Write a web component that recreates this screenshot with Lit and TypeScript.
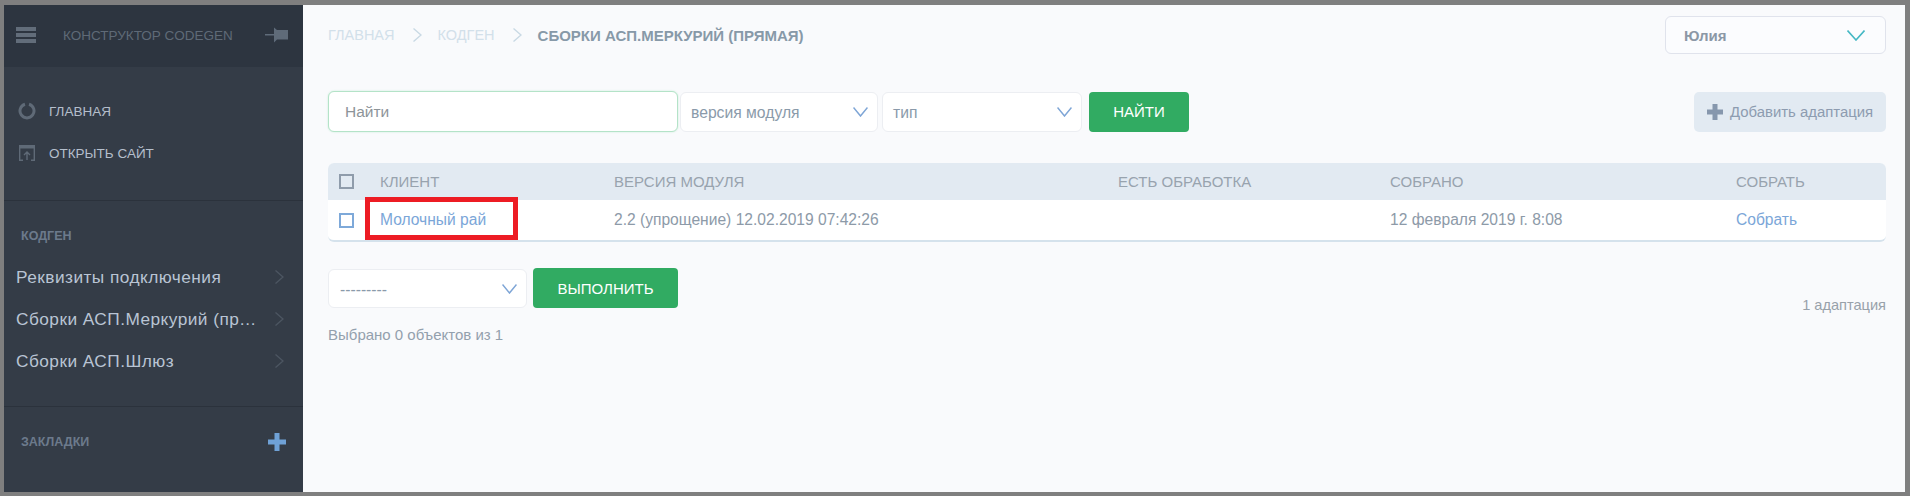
import { LitElement, html, css } from "lit";
import { customElement } from "lit/decorators.js";

const chevron = (w: number, h: number, color: string, sw = 1.5) => html`<svg class="chev" width=${w} height=${h} viewBox="0 0 ${w} ${h}" fill="none" stroke=${color} stroke-width=${sw}><path d="M0.5 0.5 L${w / 2} ${h - 1} L${w - 0.5} 0.5"/></svg>`;
const right = (w: number, h: number, color: string) => html`<svg width=${w} height=${h} viewBox="0 0 ${w} ${h}" fill="none" stroke=${color} stroke-width="1.4"><path d="M0.5 0.5 L${w - 1} ${h / 2} L0.5 ${h - 0.5}"/></svg>`;
const plus = (s: number, t: number, color: string) => html`<svg width=${s} height=${s} viewBox="0 0 ${s} ${s}" fill=${color}><rect x=${(s - t) / 2} y="0" width=${t} height=${s}/><rect x="0" y=${(s - t) / 2} width=${s} height=${t}/></svg>`;

@customElement("app-root")
export class AppRoot extends LitElement {
  static styles = css`
    :host { display: block; width: 1910px; height: 496px; box-sizing: border-box; background: #7f7f7f; padding: 5px 5px 4px 4px; font-family: "Liberation Sans", Arial, sans-serif; overflow: hidden; }
    * { box-sizing: border-box; }
    .app { display: flex; height: 100%; }
    .side { width: 299px; flex: none; background: #343c47; display: flex; flex-direction: column; }
    .side-top { height: 62px; flex: none; background: #2d3540; display: flex; align-items: flex-start; padding: 22px 0 0 12px; }
    .title { margin-left: 27px; font-size: 13.5px; line-height: 20px; margin-top: -1px; color: #5f6a77; width: 202px; white-space: nowrap; }
    .links { height: 134px; flex: none; padding: 34px 0 0 14px; display: flex; flex-direction: column; gap: 22px; border-bottom: 1px solid #2b323c; }
    .link { display: flex; align-items: center; height: 20px; font-size: 13.5px; color: #b5bfcc; gap: 13px; }
    .link svg { flex: none; width: 18px; }
    .section { padding: 27px 0 0 17px; height: 206px; flex: none; border-bottom: 1px solid #2b323c; }
    .sec-title { font-size: 12.5px; font-weight: 700; color: #6c7a8c; line-height: 16px; }
    .items { margin: 18px 0 0 -5px; display: flex; flex-direction: column; gap: 12px; }
    .item { display: flex; align-items: center; height: 30px; font-size: 17.3px; letter-spacing: 0.45px; color: #b9c4d4; }
    .item span { width: 246px; margin-right: 13px; white-space: nowrap; overflow: hidden; text-overflow: ellipsis; }
    .marks { display: flex; align-items: center; justify-content: space-between; padding: 26px 17px 0 17px; }
    .main { flex: 1; background: #f9fafc; padding: 11px 19px 0 25px; min-width: 0; }
    .top { display: flex; align-items: center; justify-content: space-between; height: 38px; }
    .crumbs { display: flex; align-items: center; font-size: 14.5px; color: #d2e0ea; white-space: nowrap; }
    .crumbs svg { margin: 0 16px 0 18px; }
    .crumbs b { color: #8799a8; font-size: 15px; }
    .user { width: 221px; height: 38px; border: 1px solid #e0e3ec; border-radius: 6px; background: #fbfcfe; display: flex; align-items: center; justify-content: space-between; padding: 0 20px 0 18px; font-size: 15px; font-weight: 700; color: #8b98a6; }
    .filters { display: flex; align-items: center; margin-top: 37px; height: 41px; }
    .search { width: 350px; height: 41px; background: #fff; border: 1px solid #b4e3c8; border-radius: 6px; box-shadow: 0 0 2px #c6ecd6; padding: 0 16px; font-size: 15.5px; color: #8d9499; display: flex; align-items: center; margin-right: 2px; }
    .select { height: 40px; background: #fff; border: 1px solid #eceef2; border-radius: 6px; display: flex; align-items: center; justify-content: space-between; padding: 0 9px 0 10px; font-size: 15.7px; color: #8a9aaa; }
    .select span { position: relative; top: 1px; }
    .s1 { width: 198px; margin-right: 4px; }
    .s2 { width: 200px; margin-right: 7px; }
    .btn { height: 40px; background: #31ab62; color: #fff; border-radius: 4px; font-size: 15px; display: flex; align-items: center; justify-content: center; }
    .find { width: 100px; }
    .add { margin-left: auto; width: 192px; height: 40px; border-radius: 5px; background: #e2eaf2; color: #8d9cb0; font-size: 14.9px; display: flex; align-items: center; gap: 7px; padding-left: 13px; white-space: nowrap; }
    .table { margin-top: 31px; border-radius: 6px; overflow: hidden; background: #fff; border-bottom: 2px solid #d5e2ec; }
    .row { display: grid; grid-template-columns: 52px 234px 504px 272px 346px 1fr; align-items: center; font-size: 15px; white-space: nowrap; }
    .head { height: 37px; background: #e2eaf2; color: #98a3ae; }
    .body { height: 40px; color: #8d9aa8; font-size: 15.6px; }
    .cb { width: 15px; height: 15px; margin-left: 11px; border: 2px solid #8f9cab; }
    .body .cb { border-color: #7ea9d9; }
    .link-blue { color: #7ba6d8; }
    .client { position: relative; align-self: stretch; display: flex; align-items: center; }
    .mark { position: absolute; left: -15px; top: -3px; width: 153px; height: 43px; border: 5px solid #ed1c24; pointer-events: none; }
    .actions { display: flex; align-items: flex-start; margin-top: 26px; height: 40px; }
    .s3 { width: 199px; height: 39px; margin-top: 1px; margin-right: 6px; padding-left: 11px; padding-right: 9px; }
    .run { width: 145px; }
    .count { margin-left: auto; font-size: 14.6px; color: #98a1aa; align-self: flex-end; margin-bottom: -5px; }
    .picked { font-size: 15px; color: #93a0ad; margin-top: 19px; line-height: 16px; }
  `;

  render() {
    return html`<div class="app">
      <aside class="side">
        <div class="side-top">
          <svg width="20" height="16" viewBox="0 0 20 16" fill="#626d7a"><rect width="20" height="4"/><rect y="6" width="20" height="4"/><rect y="12" width="20" height="4"/></svg>
          <div class="title">КОНСТРУКТОР CODEGEN</div>
          <svg width="23" height="16" viewBox="0 0 23 16" fill="#5f6b79"><path d="M0 7h9V0.500l3 2.500H23v9.500H12l-3 3V8.500H0z"/></svg>
        </div>
        <div class="links">
          <div class="link"><svg height="18" viewBox="0 0 18 18" fill="none" stroke="#5f6a77" stroke-width="3"><path d="M7 2.200A7 7 0 1 0 11 2.200"/></svg>ГЛАВНАЯ</div>
          <div class="link"><svg height="16" viewBox="0 0 18 16" fill="none" stroke="#5f6a77" stroke-width="1.400"><rect x="1" y="0" width="16" height="3.500" fill="#5f6a77" stroke="none"/><path d="M1.700 14.500V3M16.300 3v11.500M1 15.300h4M13 15.300h4M9 15V7M6 10l3-3 3 3"/></svg>ОТКРЫТЬ САЙТ</div>
        </div>
        <div class="section">
          <div class="sec-title">КОДГЕН</div>
          <div class="items">
            ${["Реквизиты подключения", "Сборки АСП.Меркурий (прямая)", "Сборки АСП.Шлюз"].map((t) => html`<div class="item"><span>${t}</span>${right(9, 14, "#4c5561")}</div>`)}
          </div>
        </div>
        <div class="marks"><div class="sec-title">ЗАКЛАДКИ</div>${plus(18, 5, "#6fa1d6")}</div>
      </aside>
      <main class="main">
        <div class="top">
          <div class="crumbs">ГЛАВНАЯ${right(9, 14, "#c9d9e4")}КОДГЕН${right(9, 14, "#c9d9e4")}<b>СБОРКИ АСП.МЕРКУРИЙ (ПРЯМАЯ)</b></div>
          <div class="user">Юлия${chevron(18, 11, "#45b8c4", 1.6)}</div>
        </div>
        <div class="filters">
          <div class="search">Найти</div>
          <div class="select s1"><span>версия модуля</span>${chevron(15, 10, "#7ea5d6")}</div>
          <div class="select s2"><span>тип</span>${chevron(15, 10, "#7ea5d6")}</div>
          <div class="btn find">НАЙТИ</div>
          <div class="add">${plus(16, 5, "#8697ad")}Добавить адаптация</div>
        </div>
        <div class="table">
          <div class="row head"><div><div class="cb"></div></div><div>КЛИЕНТ</div><div>ВЕРСИЯ МОДУЛЯ</div><div>ЕСТЬ ОБРАБОТКА</div><div>СОБРАНО</div><div>СОБРАТЬ</div></div>
          <div class="row body"><div><div class="cb"></div></div><div class="client link-blue">Молочный рай<div class="mark"></div></div><div>2.2 (упрощение) 12.02.2019 07:42:26</div><div></div><div>12 февраля 2019 г. 8:08</div><div class="link-blue">Собрать</div></div>
        </div>
        <div class="actions">
          <div class="select s3"><span>---------</span>${chevron(15, 10, "#7ea5d6")}</div>
          <div class="btn run">ВЫПОЛНИТЬ</div>
          <div class="count">1 адаптация</div>
        </div>
        <div class="picked">Выбрано 0 объектов из 1</div>
      </main>
    </div>`;
  }
}
